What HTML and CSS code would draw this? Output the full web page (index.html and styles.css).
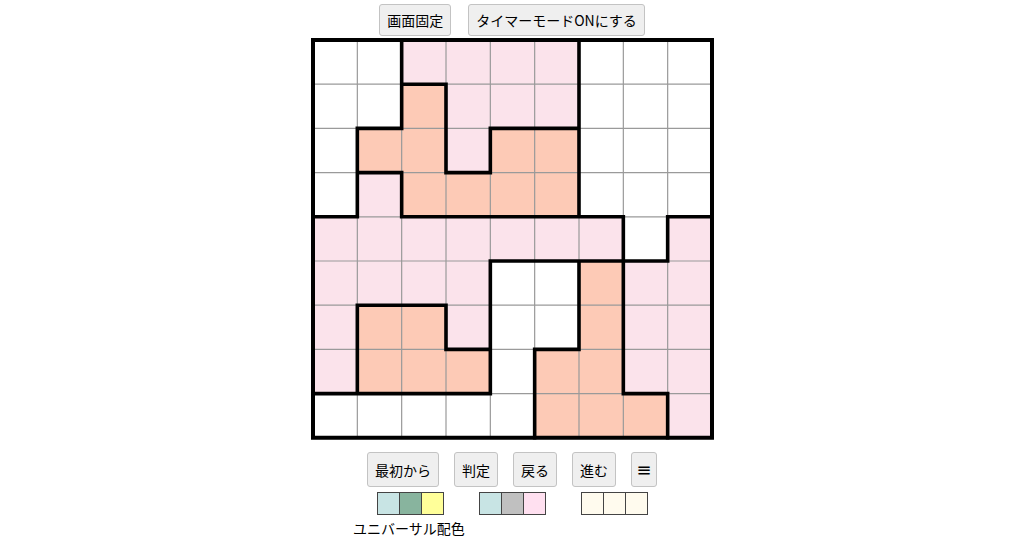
FILE: index.html
```html
<!DOCTYPE html>
<html lang="ja">
<head>
<meta charset="utf-8">
<title>Puzzle</title>
<link rel="stylesheet" href="styles.css">
</head>
<body>
<div class="top-bar">
  <button class="btn">画面固定</button>
  <button class="btn">タイマーモードONにする</button>
</div>
<svg class="board" width="404" height="403" viewBox="0 0 404 403">
  <rect class="bg" x="0" y="0" width="404" height="403"></rect>
  <g transform="translate(2 2) scale(44.333 44.2)">
    <path class="pink" d="M2 0h4v1h-4z M3 1h3v1h-3z M3 2h1v1h-1z M1 3h1v1h-1z M0 4h7v1h-7z M8 4h1v1h-1z M0 5h4v1h-4z M7 5h2v1h-2z M0 6h1v1h-1z M3 6h1v1h-1z M7 6h2v1h-2z M0 7h1v1h-1z M7 7h2v1h-2z M8 8h1v1h-1z"></path>
    <path class="orange" d="M2 1h1v1h-1z M1 2h2v1h-2z M4 2h2v1h-2z M2 3h4v1h-4z M6 5h1v1h-1z M1 6h2v1h-2z M6 6h1v1h-1z M1 7h3v1h-3z M5 7h2v1h-2z M5 8h3v1h-3z"></path>
    <path class="thin" vector-effect="non-scaling-stroke" d="M1 0V9 M2 0V9 M3 0V9 M4 0V9 M5 0V9 M6 0V9 M7 0V9 M8 0V9 M0 1H9 M0 2H9 M0 3H9 M0 4H9 M0 5H9 M0 6H9 M0 7H9 M0 8H9"></path>
    <path class="thick" vector-effect="non-scaling-stroke" d="M1 2V4 M1 6V8 M2 0V2 M2 3V4 M3 1V3 M3 6V7 M4 2V3 M4 5V8 M5 7V9 M6 0V4 M6 5V7 M7 4V8 M8 4V5 M8 8V9 M2 1H3 M1 2H2 M4 2H6 M1 3H2 M3 3H4 M0 4H1 M2 4H7 M8 4H9 M4 5H8 M1 6H3 M3 7H4 M5 7H6 M0 8H4 M7 8H8"></path>
    <rect class="frame" vector-effect="non-scaling-stroke" x="0" y="0" width="9" height="9"></rect>
  </g>
</svg>
<div class="bottom-bar">
  <button class="btn btn-lg">最初から</button>
  <button class="btn btn-lg">判定</button>
  <button class="btn btn-lg">戻る</button>
  <button class="btn btn-lg">進む</button>
  <button class="btn btn-lg btn-menu">≡</button>
</div>
<div class="palettes">
  <div class="palette">
    <span class="sw sw-cyan"></span><span class="sw sw-green"></span><span class="sw sw-yellow"></span>
  </div>
  <div class="palette">
    <span class="sw sw-cyan"></span><span class="sw sw-gray"></span><span class="sw sw-pink"></span>
  </div>
  <div class="palette">
    <span class="sw sw-cream"></span><span class="sw sw-cream"></span><span class="sw sw-cream"></span>
  </div>
</div>
<div class="label">ユニバーサル配色</div>
</body>
</html>
```
FILE: styles.css
```css
html, body {
  margin: 0;
  padding: 0;
  background: #ffffff;
}
body {
  font-family: "Noto Sans CJK JP", "Noto Sans", sans-serif;
  color: #000;
  width: 1024px;
  height: 538px;
  overflow: hidden;
}
.top-bar {
  display: flex;
  justify-content: center;
  gap: 17px;
  padding-top: 4px;
}
.btn {
  font-family: "Noto Sans CJK JP", "Noto Sans", sans-serif;
  font-size: 14px;
  line-height: 20px;
  height: 32px;
  padding: 0 7px;
  margin: 0;
  background: #efefef;
  color: #000;
  border: 1px solid #c3c3c3;
  border-radius: 3px;
  box-sizing: border-box;
}
.btn-lg {
  height: 35px;
  padding: 0 7px;
}
.btn-menu {
  width: 26px;
  padding: 0;
  font-family: "DejaVu Sans", sans-serif;
  font-size: 18px;
  line-height: 18px;
}
.board {
  display: block;
  margin: 2px auto 0;
  position: relative;
  left: 0.5px;
}
.bg { fill: #ffffff; }
.pink { fill: #fbe3eb; }
.orange { fill: #fdcab6; }
.thin {
  fill: none;
  stroke: #9a9a9a;
  stroke-width: 1.2px;
}
.thick {
  fill: none;
  stroke: #000;
  stroke-width: 3.6px;
  stroke-linecap: square;
}
.frame {
  fill: none;
  stroke: #000;
  stroke-width: 4px;
}
.bottom-bar {
  display: flex;
  justify-content: center;
  gap: 15px;
  margin-top: 11px;
}
.palettes {
  display: flex;
  justify-content: center;
  gap: 35px;
  margin-top: 5px;
}
.palette {
  display: flex;
  border-right: 1px solid #444;
}
.sw {
  display: block;
  width: 21px;
  height: 21px;
  border: 1px solid #444;
  border-right: none;
}
.sw-cyan { background: #c8e4e4; }
.sw-green { background: #88b49e; }
.sw-yellow { background: #ffff99; }
.sw-gray { background: #c0c0c0; }
.sw-pink { background: #ffe0f0; }
.sw-cream { background: #fffbee; }
.label {
  margin: 3px 0 0 353px;
  font-size: 14px;
  line-height: 20px;
  color: #000;
}
```
